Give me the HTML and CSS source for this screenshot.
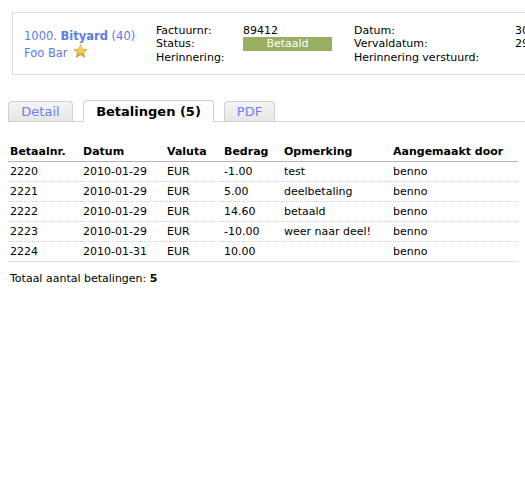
FILE: index.html
```html
<!DOCTYPE html>
<html>
<head>
<meta charset="utf-8">
<link rel="stylesheet" href="styles.css">
</head>
<body>
<div class="page">
  <div class="header">
    <div class="client">
      <div class="client-line"><a class="link">1000. <b>Bityard</b> (40)</a></div>
      <div class="client-line"><a class="link">Foo Bar</a>
        <svg class="star" width="15" height="14" viewBox="0 0 24 23">
          <defs>
            <linearGradient id="sg" x1="0" y1="0" x2="0" y2="1">
              <stop offset="0" stop-color="#fff3a0"/>
              <stop offset="0.6" stop-color="#f0c53a"/>
              <stop offset="1" stop-color="#d9a21c"/>
            </linearGradient>
          </defs>
          <polygon points="12,1 15,8.5 23,9 17,14.2 19,22 12,17.6 5,22 7,14.2 1,9 9,8.5" fill="url(#sg)" stroke="#b8891a" stroke-width="1"/>
        </svg>
      </div>
    </div>
    <div class="info">
      <div class="lbl">Factuurnr:</div><div class="val">89412</div>
      <div class="lbl">Datum:</div><div class="val">30-01-2010</div>
      <div class="lbl">Status:</div><div class="val"><span class="badge">Betaald</span></div>
      <div class="lbl">Vervaldatum:</div><div class="val">29-02-2010</div>
      <div class="lbl">Herinnering:</div><div class="val"></div>
      <div class="lbl">Herinnering verstuurd:</div><div class="val"></div>
    </div>
  </div>

  <div class="tabs">
    <div class="tab">Detail</div>
    <div class="tab active">Betalingen (5)</div>
    <div class="tab">PDF</div>
  </div>

  <table class="payments">
    <thead>
      <tr><th class="c1">Betaalnr.</th><th class="c2">Datum</th><th class="c3">Valuta</th><th class="c4">Bedrag</th><th class="c5">Opmerking</th><th>Aangemaakt door</th></tr>
    </thead>
    <tbody>
      <tr><td>2220</td><td>2010-01-29</td><td>EUR</td><td>-1.00</td><td>test</td><td>benno</td></tr>
      <tr><td>2221</td><td>2010-01-29</td><td>EUR</td><td>5.00</td><td>deelbetaling</td><td>benno</td></tr>
      <tr><td>2222</td><td>2010-01-29</td><td>EUR</td><td>14.60</td><td>betaald</td><td>benno</td></tr>
      <tr><td>2223</td><td>2010-01-29</td><td>EUR</td><td>-10.00</td><td>weer naar deel!</td><td>benno</td></tr>
      <tr class="last"><td>2224</td><td>2010-01-31</td><td>EUR</td><td>10.00</td><td></td><td>benno</td></tr>
    </tbody>
  </table>

  <p class="total">Totaal aantal betalingen: <b>5</b></p>
</div>
</body>
</html>
```
FILE: styles.css
```css
html, body {
  margin: 0;
  padding: 0;
  background: #fff;
  overflow: hidden;
}
body {
  font-family: "DejaVu Sans", Verdana, sans-serif;
  font-size: 11px;
  color: #000;
}
.page {
  padding: 12px 0 0 8px;
  width: 517px;
  overflow: hidden;
}
.header {
  margin-left: 4px;
  width: 600px;
  border: 1px solid #dcdcdc;
  display: flex;
  align-items: center;
  padding: 11px 0 10px 11px;
  box-sizing: border-box;
}
.client {
  width: 132px;
  flex: none;
}
.client-line {
  line-height: 17px;
  height: 17px;
  display: flex;
  align-items: center;
  white-space: nowrap;
}
.client-line:first-child {
  margin-top: 1px;
}
.link {
  color: #5a7be8;
  font-size: 11.5px;
}
.star {
  margin-left: 5px;
  margin-top: -4px;
}
.info {
  display: grid;
  grid-template-columns: 87px 111px 161px 80px;
  line-height: 13px;
}
.badge {
  display: block;
  width: 89px;
  height: 14px;
  line-height: 14px;
  background: #97ae63;
  color: #fff;
  text-align: center;
  font-size: 11px;
  border-radius: 1px;
}
.tabs {
  margin-top: 25px;
  display: flex;
  align-items: flex-end;
  gap: 10px;
  border-bottom: 1px solid #cfcfcf;
  height: 21px;
  width: 600px;
}
.tab {
  height: 19px;
  line-height: 19px;
  font-size: 13px;
  color: #6a80ee;
  background: linear-gradient(#f4f4f4, #e6e6e6);
  border: 1px solid #cfcfcf;
  border-bottom: none;
  border-radius: 4px 4px 0 0;
  text-align: center;
  white-space: nowrap;
  box-sizing: content-box;
}
.tab:first-child { width: 63px; }
.tab:last-child { width: 49px; }
.tab.active {
  height: 21px;
  line-height: 21px;
  background: #fff;
  color: #000;
  font-weight: bold;
  margin-bottom: -1px;
  width: 129px;
}
.payments {
  margin-top: 20px;
  width: 510px;
  border-collapse: collapse;
}
.payments th, .payments td {
  text-align: left;
  padding: 0 2px;
  height: 19px;
  line-height: 19px;
  white-space: nowrap;
}
.payments th {
  font-weight: bold;
  border-bottom: 1px solid #b5b5b5;
}
.payments td {
  border-bottom: 1px dotted #d0d0d0;
}
.payments tr.last td {
  border-bottom: 1px solid #e0e0e0;
}
.c1 { width: 69px; }
.c2 { width: 80px; }
.c3 { width: 53px; }
.c4 { width: 56px; }
.c5 { width: 105px; }
.total {
  margin: 8px 0 0 2px;
  line-height: 17px;
}
```
